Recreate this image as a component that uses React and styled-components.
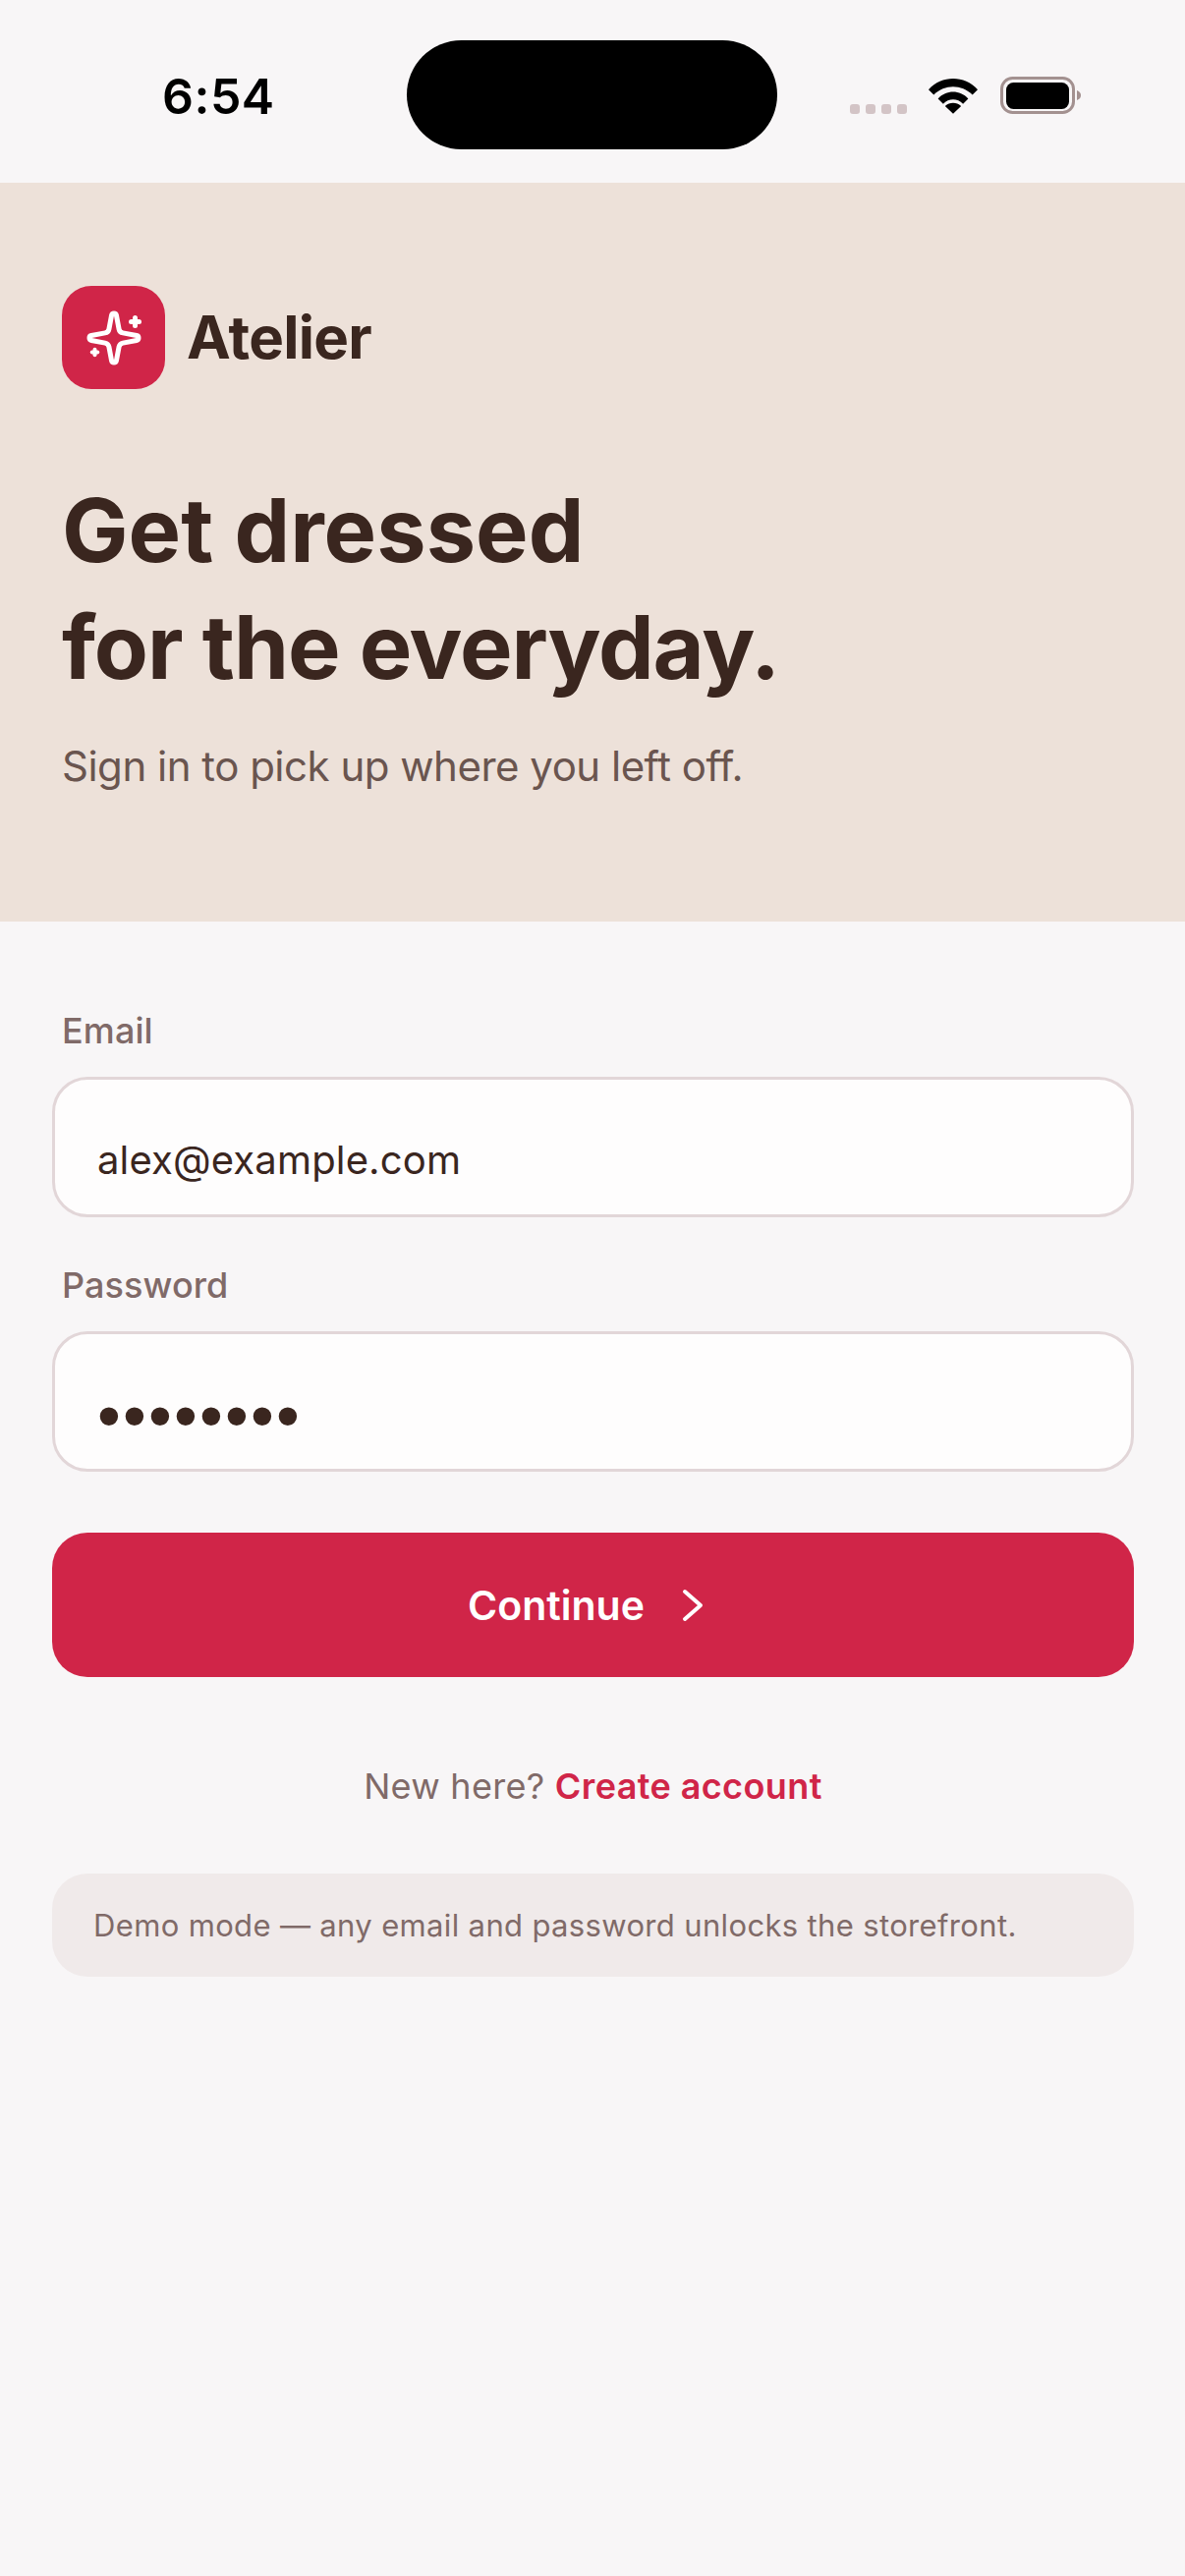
import React from "react";
import styled, { createGlobalStyle } from "styled-components";

const Global = createGlobalStyle`
  html, body { margin: 0; padding: 0; background: #f8f6f7; }
  * { box-sizing: border-box; }
`;
const Page = styled.div`
  width: 1206px; height: 2622px; background: #f8f6f7; overflow: hidden;
  font-family: Inter, "Liberation Sans", sans-serif; color: #3a261f;
`;
const StatusBar = styled.div`
  height: 186px; display: grid; grid-template-columns: 414px 377px 1fr; align-items: start; padding-top: 41px;
`;
const Time = styled.div`
  font-weight: 600; font-size: 50px; line-height: 57px;
  color: #000; padding: 29px 0 0 165px; letter-spacing: 0.5px;
  font-variation-settings: "opsz" 17;
`;
const Island = styled.div`
  height: 111px; border-radius: 56px; background: #000;
`;
const StatusIcons = styled.div`
  display: flex; align-items: flex-start; padding: 37px 0 0 74px;
`;
const Signal = styled.div`
  display: flex; gap: 6px; margin-top: 28px; margin-right: 22px;
  i { display: block; width: 10px; height: 10px; border-radius: 3px; background: #d3c4c6; }
`;
const Wifi = styled.svg`
  margin-top: 1px;
`;
const Battery = styled.svg`
  margin-left: 23px;
`;
const Hero = styled.header`
  height: 752px; background: #ede1d9; padding: 105px 63px 0;
`;
const Brand = styled.div`
  display: flex; align-items: center; gap: 22px;
`;
const LogoTile = styled.div`
  width: 105px; height: 105px; border-radius: 30px; background: #d02548;
  display: flex; align-items: center; justify-content: center;
`;
const BrandName = styled.div`
  font-size: 60px; font-weight: 700; letter-spacing: -0.7px; line-height: 72px; margin-top: -2px;
  font-variation-settings: "opsz" 20;
`;
const Title = styled.h1`
  margin: 84px 0 0; font-size: 90px; font-weight: 700; line-height: 119px;
  font-variation-settings: "opsz" 30;
`;
const TitleLine = styled.span`
  display: block; letter-spacing: ${(p) => p.$tracking}px;
`;
const Subtitle = styled.p`
  margin: 32px 0 0; font-size: 42px; line-height: 60px; color: #6a554f; letter-spacing: -0.5px;
`;
const Form = styled.main`
  padding: 85px 52px 0 53px; display: flex; flex-direction: column;
`;
const Label = styled.div`
  font-size: 36px; font-weight: 450; line-height: 52px; color: #806a68; padding-left: 10px; margin-bottom: 21px; letter-spacing: 0.1px;
  font-variation-settings: "opsz" 14;
`;
const Field = styled.div`
  height: 143px; border: 3px solid #e2d6d8; border-radius: 36px; background: #fefdfd;
  padding: 52px 0 0 43px; font-size: 40px; line-height: 60px; color: #3a261f; margin-bottom: 43px; letter-spacing: 0.15px;
  font-variation-settings: "opsz" 14;
`;
const PasswordField = styled(Field)`
  font-family: "Liberation Sans", sans-serif; font-size: 68px; letter-spacing: 2.2px; padding-top: 52px;
`;
const Button = styled.button`
  height: 147px; margin-top: 19px; border: 0; border-radius: 36px; background: #d02548; color: #fff;
  display: flex; align-items: center; justify-content: center; gap: 37px; padding: 0 14px 0 0;
  font-family: inherit; font-size: 41px; font-weight: 560;
  font-variation-settings: "opsz" 14;
`;
const SignUp = styled.div`
  margin-top: 85px; text-align: center; font-size: 36px; line-height: 52px; color: #806a68; letter-spacing: 0.28px;
  font-variation-settings: "opsz" 14;
  a { color: #d02548; font-weight: 600; letter-spacing: 0.4px; }
`;
const Note = styled.div`
  margin-top: 63px; height: 105px; border-radius: 36px; background: #f0eaea; padding: 0 42px;
  display: flex; align-items: center; font-size: 31px; color: #806a68; letter-spacing: 0.35px;
  font-variation-settings: "opsz" 14;
`;

export default function App() {
  return (
    <Page>
      <Global />
      <StatusBar>
        <Time>6:54</Time>
        <Island />
        <StatusIcons>
          <Signal><i /><i /><i /><i /></Signal>
          <Wifi width="50" height="37" viewBox="0 0 52 38">
            <path d="M0 12.500C14-3 38-3 52 12.500L46.500 18C35 6.500 17 6.500 5.500 18Z M10 22C19 12.500 33 12.500 42 22L36.500 27.500C30.500 21.500 21.500 21.500 15.500 27.500Z M26 38L17.500 30C22.500 25.500 29.500 25.500 34.500 30Z" fill="#000" />
          </Wifi>
          <Battery width="84" height="38" viewBox="0 0 84 38">
            <rect x="1.500" y="1.500" width="73" height="35" rx="11" fill="none" stroke="#a39190" strokeWidth="3" />
            <rect x="6" y="6" width="64" height="27" rx="7.500" fill="#000" />
            <path d="M78 14C81 15 82 17 82 19C82 21 81 23 78 24Z" fill="#a39190" />
          </Battery>
        </StatusIcons>
      </StatusBar>
      <Hero>
        <Brand>
          <LogoTile>
            <svg width="60" height="60" viewBox="0 0 24 24" fill="none" stroke="#fff" strokeWidth="2" strokeLinecap="round" strokeLinejoin="round">
              <path d="M11.017 2.814a1 1 0 0 1 1.966 0l1.051 5.558a2 2 0 0 0 1.594 1.594l5.558 1.051a1 1 0 0 1 0 1.966l-5.558 1.051a2 2 0 0 0-1.594 1.594l-1.051 5.558a1 1 0 0 1-1.966 0l-1.051-5.558a2 2 0 0 0-1.594-1.594l-5.558-1.051a1 1 0 0 1 0-1.966l5.558-1.051a2 2 0 0 0 1.594-1.594z" />
              <path d="M20.600 3.800v3.200" /><path d="M22.200 5.400h-3.200" />
              <path d="M4.200 16.700v2.200" strokeWidth="1.600" /><path d="M5.300 17.800h-2.200" strokeWidth="1.600" />
            </svg>
          </LogoTile>
          <BrandName>Atelier</BrandName>
        </Brand>
        <Title>
          <TitleLine $tracking={0}>Get dressed</TitleLine>
          <TitleLine $tracking={-1.06}>for the everyday.</TitleLine>
        </Title>
        <Subtitle>Sign in to pick up where you left off.</Subtitle>
      </Hero>
      <Form>
        <Label>Email</Label>
        <Field>alex@example.com</Field>
        <Label>Password</Label>
        <PasswordField>••••••••</PasswordField>
        <Button>
          Continue
          <svg width="24" height="34" viewBox="0 0 24 34" fill="none" stroke="#fff" strokeWidth="4" strokeLinecap="round" strokeLinejoin="round"><path d="M4 3L20 17L4 31" /></svg>
        </Button>
        <SignUp>New here? <a>Create account</a></SignUp>
        <Note>Demo mode — any email and password unlocks the storefront.</Note>
      </Form>
    </Page>
  );
}
